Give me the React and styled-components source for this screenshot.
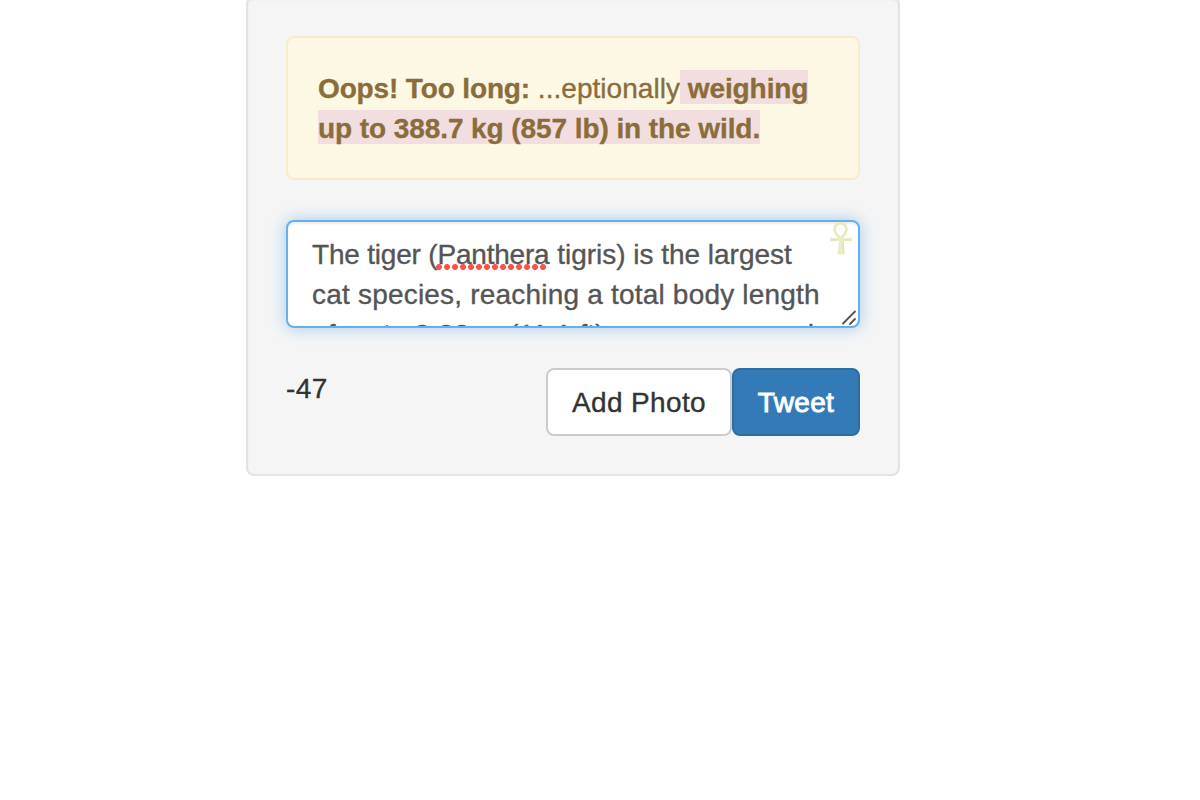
import React from "react";
import styled, { createGlobalStyle } from "styled-components";

const GlobalStyle = createGlobalStyle`
  *, *::before, *::after { box-sizing: border-box; }
  body {
    margin: 0;
    overflow: hidden;
    background: #fff;
    color: #333;
    font: 28px/40px "Helvetica Neue", Helvetica, "Liberation Sans", Arial, sans-serif;
    -webkit-text-stroke: 0.35px currentColor;
  }
`;

const Page = styled.main`
  display: flex;
  padding-left: 246px;
`;

const Well = styled.section`
  width: 654px;
  height: 480px;
  margin-top: -4px;
  padding: 38px;
  border: 2px solid #e3e3e3;
  border-radius: 8px;
  background: #f5f5f5;
  box-shadow: inset 0 2px 2px rgba(0, 0, 0, 0.05);
`;

const Alert = styled.div`
  height: 144px;
  margin-bottom: 40px;
  padding: 31px 30px 29px;
  border: 2px solid #faebcc;
  border-radius: 8px;
  background: #fdf8e4;
  color: #8a6d3b;
  letter-spacing: 0.04px;
  white-space: nowrap;
`;

const Lead = styled.strong`
  letter-spacing: -0.14px;
`;

const Overflow = styled.strong`
  padding: 3px 0 0;
  background: #f2dede;
  letter-spacing: -0.08px;
`;

const TextBox = styled.div`
  position: relative;
  height: 108px;
  margin-bottom: 40px;
  padding: 13px 24px 11px;
  overflow: hidden;
  border: 2px solid #66afe9;
  border-radius: 8px;
  background: #fff;
  box-shadow: inset 0 2px 2px rgba(0, 0, 0, 0.075), 0 0 16px rgba(102, 175, 233, 0.6);
  color: #555;
`;

const Line = styled.div`
  letter-spacing: ${(p) => p.$tracking}px;
  white-space: nowrap;
`;

const Misspelled = styled.span`
  position: relative;

  &::after {
    content: "";
    position: absolute;
    left: -1px;
    bottom: 0;
    width: 112px;
    height: 6px;
    background: radial-gradient(circle at 3px 3px, #ff5148 2.6px, rgba(255, 81, 72, 0) 3.3px) 0 0 / 8px 6px repeat-x;
  }
`;

const Remainder = styled.span`
  letter-spacing: -0.02px;
`;

const Ankh = styled.svg`
  position: absolute;
  top: 0;
  right: 5px;
  width: 24px;
  height: 34px;
`;

const ResizeGrip = styled.svg`
  position: absolute;
  right: 0;
  bottom: 0;
  width: 18px;
  height: 18px;
`;

const Footer = styled.div`
  display: flex;
  justify-content: space-between;
  align-items: flex-start;
`;

const Counter = styled.span`
  padding-top: 1px;
  letter-spacing: 0.4px;
`;

const Actions = styled.div`
  display: flex;
`;

const Button = styled.button`
  width: ${(p) => (p.$primary ? 128 : 186)}px;
  height: 68px;
  padding: 2px 0 0;
  border: 2px solid ${(p) => (p.$primary ? "#2e6da4" : "#ccc")};
  border-radius: 8px;
  background: ${(p) => (p.$primary ? "#337ab7" : "#fff")};
  color: ${(p) => (p.$primary ? "#fff" : "#333")};
  font: inherit;
  letter-spacing: 0.35px;
  white-space: nowrap;
  -webkit-text-stroke: ${(p) => (p.$primary ? 0.9 : 0.35)}px currentColor;
`;

export default function App() {
  return (
    <Page>
      <GlobalStyle />
      <Well>
        <Alert>
          <Lead>Oops! Too long:</Lead> ...eptionally
          <Overflow>
            {" "}weighing
            <br />
            up to 388.7 kg (857 lb) in the wild.
          </Overflow>
        </Alert>
        <TextBox>
          <Line $tracking={-0.2}>
            The tiger (<Misspelled>Panthera</Misspelled>
            <Remainder> tigris) is the largest</Remainder>
          </Line>
          <Line $tracking={0.2}>cat species, reaching a total body length</Line>
          <Line $tracking={0.15}>of up to 3.38 m (11.1 ft) over curves and</Line>
          <Ankh viewBox="0 0 24 34" fill="none">
            <path
              d="M11.500 17C8 13 5.500 10 5.500 7a6 5.800 0 0 1 12 0C17.500 10 15 13 11.500 17Z"
              stroke="#e8ebc0"
              strokeWidth="2.800"
            />
            <path d="M1 15.500l9 1h3l10-1v4l-9-1 1.500 14h-7L10 18.500l-9 1Z" fill="#eaecc4" />
            <path d="M2 18h8M14 18h8M14 19l1 12" stroke="#dcdfae" strokeWidth="1" />
          </Ankh>
          <ResizeGrip viewBox="0 0 18 18" stroke="#555" strokeWidth="1.900" strokeLinecap="round">
            <path d="M3 15.500 15 3.500M10 16 15 11" />
          </ResizeGrip>
        </TextBox>
        <Footer>
          <Counter>-47</Counter>
          <Actions>
            <Button>Add Photo</Button>
            <Button $primary>Tweet</Button>
          </Actions>
        </Footer>
      </Well>
    </Page>
  );
}
